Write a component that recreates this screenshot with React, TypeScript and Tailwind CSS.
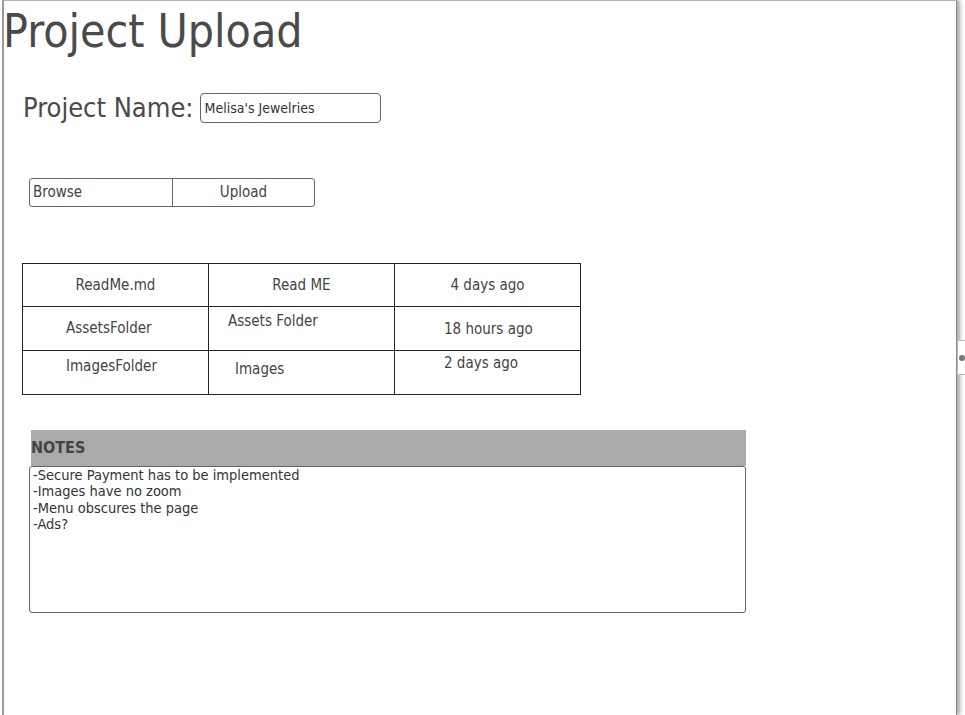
import React from "react";

const font = { fontFamily: '"DejaVu Sans Condensed", "DejaVu Sans", sans-serif' };

export default function App() {
  return (
    <div className="relative w-[965px] h-[715px] bg-white overflow-hidden" style={font}>
      <div className="ml-[2px] w-[955px] h-[715px] border-l-2 border-t border-r border-l-[#9a9a9a] border-t-[#b0b0b0] border-r-[#8a8a8a] shadow-[3px_0_4px_rgba(0,0,0,0.35)] bg-white">
        <h1 className="-ml-[1px] pt-[2px] text-[46px] leading-[56px] text-[#4a4a4a]">Project Upload</h1>
        <div className="mt-[33px] ml-[19px] flex items-center">
          <span className="text-[27px] leading-[32px] text-[#4a4a4a]">Project Name:</span>
          <div className="ml-[6px] w-[181px] h-[30px] border border-[#666] rounded-[4px] flex items-center pl-[4px] text-[14px] text-[#333]">
            Melisa's Jewelries
          </div>
        </div>
        <div className="mt-[54px] ml-[25px] flex w-[286px] h-[29px] border border-[#666] rounded-[3px] text-[15px] text-[#444]">
          <div className="w-[143px] border-r border-[#666] flex items-center pl-[3px]">Browse</div>
          <div className="flex-1 flex items-center justify-center">Upload</div>
        </div>
        <div className="mt-[56px] ml-[18px] w-[559px] border border-[#222] text-[15px] text-[#444]">
          <div className="flex h-[43px] border-b border-[#222]">
            <div className="w-[186px] border-r border-[#222] flex items-center justify-center">ReadMe.md</div>
            <div className="w-[186px] border-r border-[#222] flex items-center justify-center">Read ME</div>
            <div className="flex-1 flex items-center justify-center">4 days ago</div>
          </div>
          <div className="flex h-[44px] border-b border-[#222]">
            <div className="w-[186px] border-r border-[#222] flex items-center pl-[43px]">AssetsFolder</div>
            <div className="w-[186px] border-r border-[#222] pl-[19px] pt-[3px]">Assets Folder</div>
            <div className="flex-1 pl-[49px] pt-[11px]">18 hours ago</div>
          </div>
          <div className="flex h-[43px]">
            <div className="w-[186px] border-r border-[#222] pl-[43px] pt-[4px]">ImagesFolder</div>
            <div className="w-[186px] border-r border-[#222] pl-[26px] pt-[7px]">Images</div>
            <div className="flex-1 pl-[49px] pt-[1px]">2 days ago</div>
          </div>
        </div>
        <div className="mt-[35px] ml-[25px] w-[717px]">
          <div className="ml-[2px] h-[36px] bg-[#aaaaaa] flex items-center text-[16px] font-bold text-[#444]">NOTES</div>
          <div className="h-[147px] border border-[#666] rounded-[3px] pl-[3px] text-[14.5px] leading-[16.3px] text-[#333]">
            <div>-Secure Payment has to be implemented</div>
            <div>-Images have no zoom</div>
            <div>-Menu obscures the page</div>
            <div>-Ads?</div>
          </div>
        </div>
      </div>
      <div className="absolute left-[957px] top-[340px] w-[8px] h-[35px] bg-white border-y border-l border-[#bbb] flex items-center justify-center">
        <div className="w-[6px] h-[6px] rounded-full bg-[#777] ml-[1px]" />
      </div>
    </div>
  );
}
